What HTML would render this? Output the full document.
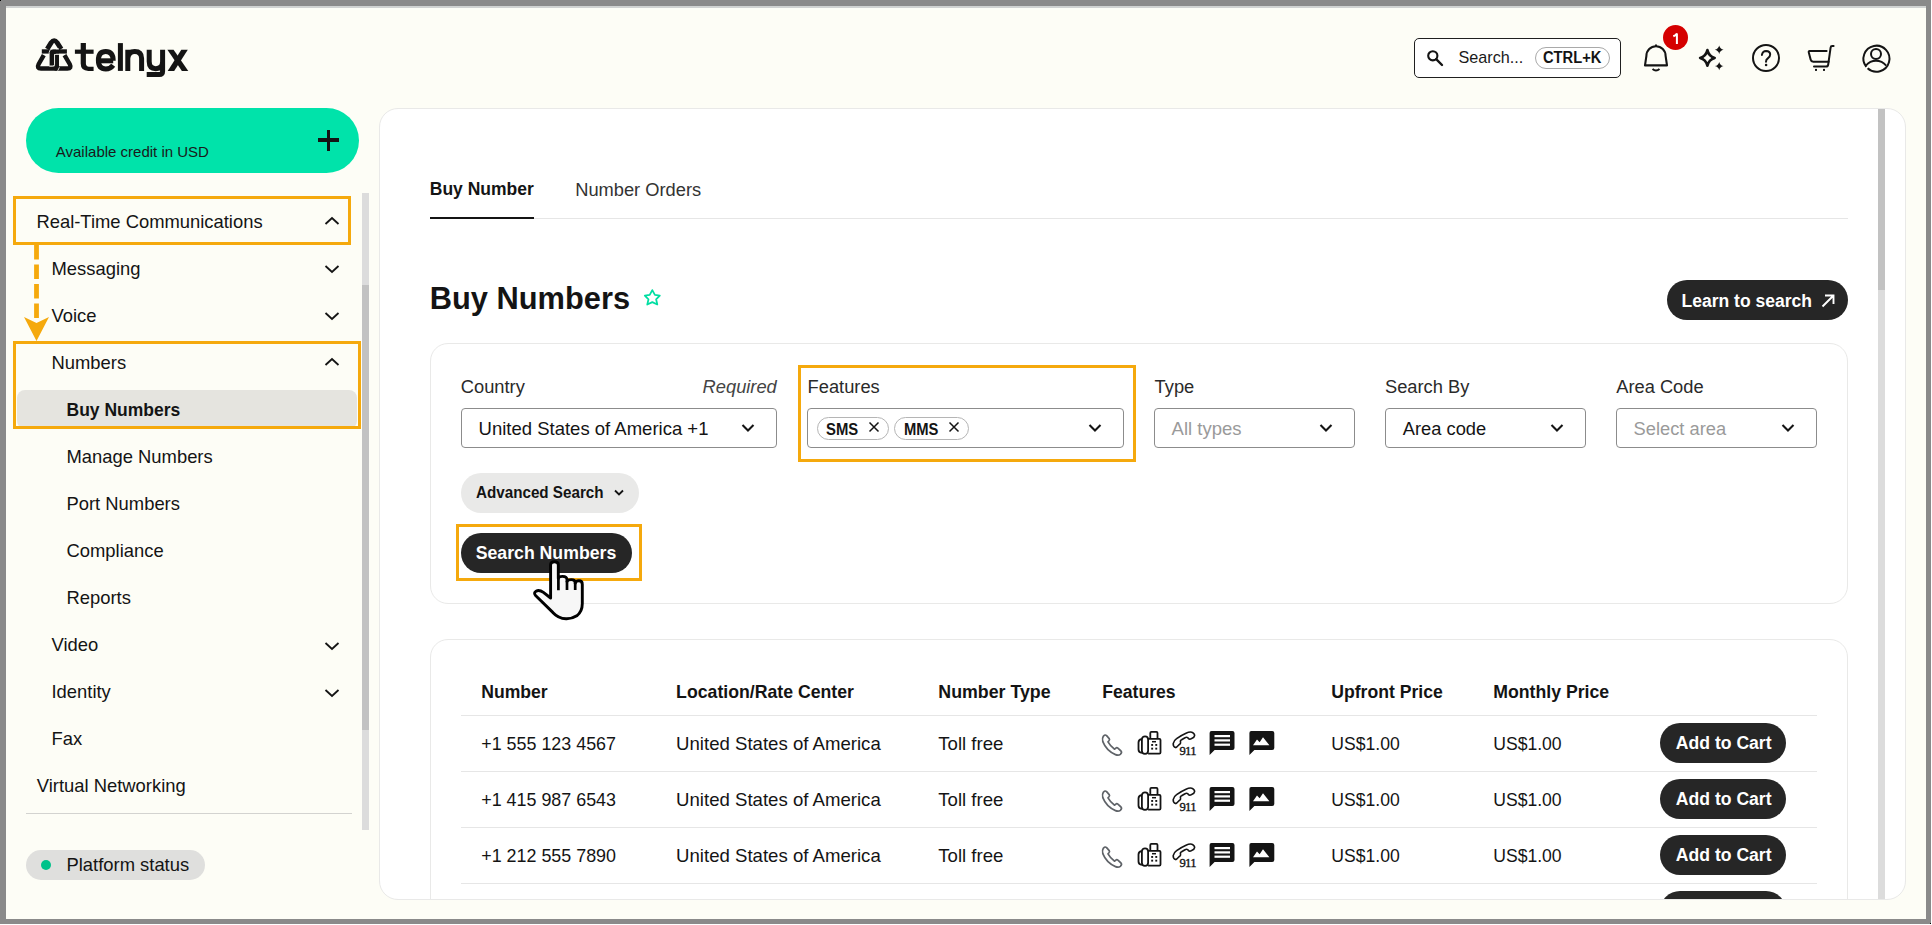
<!DOCTYPE html><html><head><meta charset="utf-8"><style>
html,body{margin:0;padding:0;}
body{width:1932px;height:925px;overflow:hidden;background:#ffffff;position:relative;font-family:"Liberation Sans",sans-serif;}
.a{position:absolute;box-sizing:border-box;}
.t{position:absolute;white-space:nowrap;line-height:1;}
svg{position:absolute;overflow:visible;}
</style></head><body>
<div class="a" style="left:0px;top:0px;width:1931px;height:924px;background:#8a8a8a;"></div>
<div class="a" style="left:6px;top:6px;width:1920px;height:913px;background:#fdfdf6;"></div>
<div class="a" style="left:6px;top:6px;width:1920px;height:2px;background:#d0d2d1;"></div>
<div class="a" style="left:0px;top:0px;width:1px;height:1px;background:#000;"></div>
<div class="a" style="left:1930px;top:923px;width:1px;height:1px;background:#000;"></div>
<svg style="left:0;top:0" width="200" height="90" viewBox="0 0 200 90">
<g fill="none" stroke="#141414" stroke-width="4.4" stroke-linejoin="round">
<path d="M47.2,49 L51.2,42.6 Q54.15,38.6 57.1,42.6 L61.2,49" stroke-width="4.9"/>
<path d="M43.8,55.1 L38.6,64.2 Q36.4,68.5 41,68.5 L67.4,68.5 Q72,68.5 69.8,64.2 L64.5,55.1" stroke-linejoin="miter"/>
</g>
<rect x="41.8" y="49.3" width="25.1" height="4.3" fill="#141414"/>
<path d="M49.6,65.7 L49.6,52.7 Q49.6,49.3 53,49.3 L56,49.3 L56,54 L54.2,54 L54.2,65.7 Z" fill="#141414"/>
<rect x="54.6" y="53.5" width="4.4" height="17.1" fill="#141414"/>
<g fill="none" stroke="#fdfdf6" stroke-width="0.85">
<path d="M49.15,53.8 L49.15,52.6 Q49.15,48.85 53,48.85 L59,48.85"/>
<path d="M59.4,54.45 L54.55,54.45 L54.55,64.4 Q54.55,66.2 52.4,66.2 L49.3,66.2"/>
<path d="M59.4,67.3 L57.7,70.9"/>
</g>
<g fill="#141414">
<rect x="74.9" y="49.6" width="18.7" height="4.2"/>
<path d="M80.7,43.1 L85.9,43.1 L85.9,63.6 Q85.9,66.7 89,66.7 L93.6,66.7 L93.6,70.9 L88.3,70.9 Q80.7,70.9 80.7,63.6 Z"/>
<rect x="117.9" y="43.1" width="5" height="27.8"/>
<polygon points="167.4,49.75 173.6,49.75 188.3,70.9 181.9,70.9"/>
<polygon points="181.3,49.75 187.8,49.75 174.2,70.9 167.7,70.9"/>
</g>
<g fill="none" stroke="#141414" stroke-width="5">
<path d="M98.3,60.8 L113.2,60.8"/>
<path d="M113.2,60.8 Q113.2,51.4 105.8,51.4 Q98.4,51.4 98.4,60.2 Q98.4,68.9 105.8,68.9 Q110.4,68.9 113.2,65.2"/>
<path d="M127.8,49.75 L127.8,70.9 M127.8,58.5 Q128.2,51.4 134.8,51.4 Q141.6,51.4 141.6,58.5 L141.6,70.9"/>
<path d="M149.2,49.75 L149.2,61.6 Q149.2,68.7 155.8,68.7 Q162.6,68.7 162.6,61.6 M162.6,49.75 L162.6,71.2 Q162.6,74.5 159.3,74.5 L146.7,74.5"/>
</g>
</svg>
<div class="a" style="left:1414px;top:38px;width:207px;height:40px;border:1.3px solid #1f1f1f;border-radius:5px;background:#ffffff;"></div>
<svg style="left:1426px;top:49px" width="18" height="18" viewBox="0 0 18 18">
<circle cx="6.8" cy="6.8" r="4.6" fill="none" stroke="#141414" stroke-width="2.1"/>
<path d="M10.2,10.2 L16,16" stroke="#141414" stroke-width="2.4" stroke-linecap="round"/></svg>
<div class="t" style="left:1458.5px;top:48.6px;font-size:16.2px;font-weight:400;color:#1a1a1a;">Search...</div>
<div class="a" style="left:1535px;top:47px;width:75px;height:22px;border:1px solid #a9a9a9;border-radius:11px;"></div>
<div class="t" style="left:1543.0px;top:49.4px;font-size:17.4px;font-weight:700;color:#141414;transform:scaleX(0.845);transform-origin:0 0;">CTRL+K</div>
<svg style="left:1640px;top:40px" width="32" height="36" viewBox="0 0 32 36">
<g fill="none" stroke="#141414" stroke-width="2">
<path d="M5,25.4 L6.4,15.8 A9.6,9.6 0 0 1 25.6,15.8 L27,25.4 Z" stroke-linejoin="round" stroke-width="2.1"/>
<path d="M16,4.5 L16,6.2"/>
<path d="M12.5,29 Q16,32 19.5,29"/>
</g></svg>
<div class="a" style="left:1663.2px;top:25.2px;width:25.3px;height:25.3px;border-radius:50%;background:#d50000;"></div>
<svg style="left:1670px;top:30px" width="12" height="16" viewBox="0 0 12 16"><path d="M3.3,6.3 Q5.8,5.3 6.9,3.4 L6.9,14" fill="none" stroke="#ffffff" stroke-width="2" stroke-linejoin="bevel"/></svg>
<svg style="left:1694px;top:44px" width="34" height="30" viewBox="0 0 34 30">
<path d="M13.4,6.1 Q14.9,12.4 20.7,13.9 Q14.9,15.4 13.4,21.7 Q11.9,15.4 6.1,13.9 Q11.9,12.4 13.4,6.1 Z" fill="none" stroke="#141414" stroke-width="2.6" stroke-linejoin="round"/>
<path d="M25.2,1.5 Q26,5 29.6,5.7 Q26,6.4 25.2,9.9 Q24.4,6.4 20.8,5.7 Q24.4,5 25.2,1.5 Z" fill="#141414"/>
<path d="M25.2,17.9 Q26,21.4 29.6,22.1 Q26,22.8 25.2,26.3 Q24.4,22.8 20.8,22.1 Q24.4,21.4 25.2,17.9 Z" fill="#141414"/>
</svg>
<svg style="left:1750px;top:42px" width="32" height="32" viewBox="0 0 32 32">
<circle cx="16" cy="16" r="13" fill="none" stroke="#141414" stroke-width="2"/>
<path d="M11.9,12.9 Q12.6,9 16.1,9 Q20.1,9.1 20.2,12.4 Q20.3,14.6 17.8,16.3 Q16,17.5 16,19.8" fill="none" stroke="#141414" stroke-width="2" stroke-linecap="round"/>
<circle cx="16.1" cy="23" r="1.3" fill="#141414"/>
</svg>
<svg style="left:1800px;top:40px" width="40" height="34" viewBox="0 0 40 34">
<g fill="none" stroke="#141414" stroke-width="2" stroke-linecap="round" stroke-linejoin="round">
<path d="M33.6,6 L32.2,6 Q30.8,6 30.6,7.6 L28.2,24.6 Q27.9,26.6 26,26.6 L14,26.6"/>
<path d="M26.6,11.1 L9.6,11.1 Q8.4,11.1 8.8,12.5 L10.7,19.8 Q11.2,21.7 13.2,21.7 L28.6,21.7"/>
</g>
<rect x="15" y="28.9" width="2" height="2" fill="#141414"/><rect x="23" y="28.9" width="2" height="2" fill="#141414"/>
</svg>
<svg style="left:1860px;top:42px" width="32" height="32" viewBox="0 0 32 32">
<g fill="none" stroke="#141414" stroke-width="2">
<path d="M6.3,24.8 A13,13 0 1 1 7.6,26.2"/>
<circle cx="16" cy="12" r="5"/>
<path d="M5.8,23.6 Q10,18.8 16,18.8 Q22,18.8 26.2,23.6"/>
</g></svg>
<div class="a" style="left:26px;top:108px;width:333px;height:65px;border-radius:33px;background:#00e3aa;"></div>
<div class="t" style="left:55.8px;top:144.0px;font-size:15px;font-weight:400;color:#1a1a1a;">Available credit in USD</div>
<div class="a" style="left:318px;top:138.4px;width:21px;height:3.1999999999999886px;background:#141414;"></div>
<div class="a" style="left:326.9px;top:130px;width:3.2000000000000455px;height:20.5px;background:#141414;"></div>
<div class="a" style="left:362px;top:193px;width:7px;height:637px;background:#dcdcdc;"></div>
<div class="a" style="left:362px;top:285px;width:7px;height:445px;background:#c2c2c2;"></div>
<div class="a" style="left:17px;top:390px;width:340px;height:39px;border-radius:8px;background:#e5e4df;"></div>
<div class="t" style="left:36.4px;top:212.8px;font-size:18.4px;font-weight:400;color:#141414;">Real-Time Communications</div>
<svg style="left:324px;top:214.4px" width="16" height="12" viewBox="0 0 16 12"><path d="M1.5,10 L8,4 L14.5,10" fill="none" stroke="#141414" stroke-width="1.8"/></svg>
<div class="t" style="left:51.5px;top:259.8px;font-size:18.4px;font-weight:400;color:#141414;">Messaging</div>
<svg style="left:324px;top:263.4px" width="16" height="12" viewBox="0 0 16 12"><path d="M1.5,3 L8,9 L14.5,3" fill="none" stroke="#141414" stroke-width="1.8"/></svg>
<div class="t" style="left:51.5px;top:306.8px;font-size:18.4px;font-weight:400;color:#141414;">Voice</div>
<svg style="left:324px;top:310.4px" width="16" height="12" viewBox="0 0 16 12"><path d="M1.5,3 L8,9 L14.5,3" fill="none" stroke="#141414" stroke-width="1.8"/></svg>
<div class="t" style="left:51.5px;top:353.8px;font-size:18.4px;font-weight:400;color:#141414;">Numbers</div>
<svg style="left:324px;top:355.4px" width="16" height="12" viewBox="0 0 16 12"><path d="M1.5,10 L8,4 L14.5,10" fill="none" stroke="#141414" stroke-width="1.8"/></svg>
<div class="t" style="left:66.5px;top:401.6px;font-size:17.5px;font-weight:700;color:#141414;">Buy Numbers</div>
<div class="t" style="left:66.5px;top:447.8px;font-size:18.4px;font-weight:400;color:#141414;">Manage Numbers</div>
<div class="t" style="left:66.5px;top:495.0px;font-size:18.4px;font-weight:400;color:#141414;">Port Numbers</div>
<div class="t" style="left:66.5px;top:542.0px;font-size:18.4px;font-weight:400;color:#141414;">Compliance</div>
<div class="t" style="left:66.5px;top:589.0px;font-size:18.4px;font-weight:400;color:#141414;">Reports</div>
<div class="t" style="left:51.5px;top:636.0px;font-size:18.4px;font-weight:400;color:#141414;">Video</div>
<svg style="left:324px;top:639.6px" width="16" height="12" viewBox="0 0 16 12"><path d="M1.5,3 L8,9 L14.5,3" fill="none" stroke="#141414" stroke-width="1.8"/></svg>
<div class="t" style="left:51.5px;top:683.0px;font-size:18.4px;font-weight:400;color:#141414;">Identity</div>
<svg style="left:324px;top:686.6px" width="16" height="12" viewBox="0 0 16 12"><path d="M1.5,3 L8,9 L14.5,3" fill="none" stroke="#141414" stroke-width="1.8"/></svg>
<div class="t" style="left:51.5px;top:730.0px;font-size:18.4px;font-weight:400;color:#141414;">Fax</div>
<div class="t" style="left:36.8px;top:777.0px;font-size:18.4px;font-weight:400;color:#141414;">Virtual Networking</div>
<div class="a" style="left:13px;top:196px;width:338px;height:49px;border:3px solid #f5a90d;"></div>
<div class="a" style="left:13px;top:341px;width:348px;height:88px;border:3px solid #f5a90d;"></div>
<svg style="left:0;top:0" width="60" height="350" viewBox="0 0 60 350">
<path d="M36.5,245 L36.5,323" stroke="#f5a90d" stroke-width="4.8" stroke-dasharray="14.5,5"/>
<path d="M24,317 L36.5,323 L49,317 L36.5,341 Z" fill="#f5a90d"/>
</svg>
<div class="a" style="left:26px;top:813px;width:326px;height:1px;background:#d3d3d0;"></div>
<div class="a" style="left:26px;top:850px;width:179px;height:30px;border-radius:15px;background:#dfdfdd;"></div>
<div class="a" style="left:40.7px;top:860px;width:10.3px;height:10.3px;border-radius:50%;background:#00c28a;"></div>
<div class="t" style="left:66.5px;top:856.4px;font-size:18.4px;font-weight:400;color:#141414;">Platform status</div>
<div class="a" style="left:379px;top:108px;width:1527px;height:792px;border:1px solid #e9e9e8;border-radius:19px;background:#ffffff;overflow:hidden;">
<div class="a" style="left:-380px;top:-109px;width:1932px;height:925px;">
<div class="t" style="left:429.8px;top:181.2px;font-size:17.5px;font-weight:700;color:#141414;">Buy Number</div>
<div class="t" style="left:575.2px;top:180.5px;font-size:18.3px;font-weight:400;color:#333333;">Number Orders</div>
<div class="a" style="left:534px;top:218px;width:1314px;height:1px;background:#e6e6e6;"></div>
<div class="a" style="left:430px;top:217px;width:104px;height:2px;background:#141414;"></div>
<div class="t" style="left:429.8px;top:283.9px;font-size:30.8px;font-weight:700;color:#141414;">Buy Numbers</div>
<svg style="left:640px;top:286px" width="24" height="24" viewBox="0 0 24 24">
<path d="M12.3,4.1 L14.9,8.9 L19.8,9.6 L16.1,13.3 L17.3,18.5 L12.3,16.1 L7.3,18.5 L8.5,13.3 L4.8,9.6 L9.7,8.9 Z" fill="none" stroke="#00dea2" stroke-width="1.75" stroke-linejoin="round"/></svg>
<div class="a" style="left:1667px;top:280px;width:181px;height:40px;border-radius:20px;background:#262626;"></div>
<div class="t" style="left:1681.6px;top:292.8px;font-size:17.5px;font-weight:700;color:#ffffff;">Learn to search</div>
<svg style="left:1819px;top:292px" width="18" height="18" viewBox="0 0 18 18"><path d="M3.5,14.5 L14.5,3.5 M6,3.5 L14.5,3.5 L14.5,12" fill="none" stroke="#ffffff" stroke-width="1.9"/></svg>
<div class="a" style="left:430px;top:343px;width:1418px;height:261px;border:1px solid #e9e9e8;border-radius:18px;"></div>
<div class="t" style="left:460.8px;top:378.1px;font-size:18.3px;font-weight:400;color:#2a2a2a;">Country</div>
<div class="t" style="left:702.6px;top:378.1px;font-size:18.3px;font-weight:400;color:#444444;font-style:italic;">Required</div>
<div class="t" style="left:807.6px;top:378.1px;font-size:18.3px;font-weight:400;color:#2a2a2a;">Features</div>
<div class="t" style="left:1154.6px;top:378.1px;font-size:18.3px;font-weight:400;color:#2a2a2a;">Type</div>
<div class="t" style="left:1385.0px;top:378.1px;font-size:18.3px;font-weight:400;color:#2a2a2a;">Search By</div>
<div class="t" style="left:1616.2px;top:378.1px;font-size:18.3px;font-weight:400;color:#2a2a2a;">Area Code</div>
<div class="a" style="left:461px;top:408px;width:316px;height:40px;border:1px solid #8c8c8c;border-radius:4px;background:#fff;"></div>
<svg style="left:740px;top:420px" width="16" height="16" viewBox="0 0 16 16"><path d="M2.5,5 L8,10.5 L13.5,5" fill="none" stroke="#141414" stroke-width="2.1"/></svg>
<div class="a" style="left:807px;top:408px;width:317px;height:40px;border:1px solid #8c8c8c;border-radius:4px;background:#fff;"></div>
<svg style="left:1087px;top:420px" width="16" height="16" viewBox="0 0 16 16"><path d="M2.5,5 L8,10.5 L13.5,5" fill="none" stroke="#141414" stroke-width="2.1"/></svg>
<div class="a" style="left:1154px;top:408px;width:201px;height:40px;border:1px solid #8c8c8c;border-radius:4px;background:#fff;"></div>
<svg style="left:1318px;top:420px" width="16" height="16" viewBox="0 0 16 16"><path d="M2.5,5 L8,10.5 L13.5,5" fill="none" stroke="#141414" stroke-width="2.1"/></svg>
<div class="a" style="left:1385px;top:408px;width:201px;height:40px;border:1px solid #8c8c8c;border-radius:4px;background:#fff;"></div>
<svg style="left:1549px;top:420px" width="16" height="16" viewBox="0 0 16 16"><path d="M2.5,5 L8,10.5 L13.5,5" fill="none" stroke="#141414" stroke-width="2.1"/></svg>
<div class="a" style="left:1616px;top:408px;width:201px;height:40px;border:1px solid #8c8c8c;border-radius:4px;background:#fff;"></div>
<svg style="left:1780px;top:420px" width="16" height="16" viewBox="0 0 16 16"><path d="M2.5,5 L8,10.5 L13.5,5" fill="none" stroke="#141414" stroke-width="2.1"/></svg>
<div class="t" style="left:478.6px;top:419.7px;font-size:18.5px;font-weight:400;color:#141414;">United States of America +1</div>
<div class="t" style="left:1171.6px;top:419.7px;font-size:18.5px;font-weight:400;color:#9a9a9a;">All types</div>
<div class="t" style="left:1402.8px;top:419.9px;font-size:18.3px;font-weight:400;color:#141414;">Area code</div>
<div class="t" style="left:1633.6px;top:419.9px;font-size:18.3px;font-weight:400;color:#9a9a9a;">Select area</div>
<div class="a" style="left:817px;top:417px;width:72px;height:23px;border:1px solid #b5b5b5;border-radius:12px;background:#fff;"></div>
<div class="t" style="left:826.0px;top:422.0px;font-size:16.6px;font-weight:700;color:#141414;transform:scaleX(0.895);transform-origin:0 0;">SMS</div>
<svg style="left:868px;top:421px" width="12" height="12" viewBox="0 0 12 12"><path d="M1.5,1.5 L10.5,10.5 M10.5,1.5 L1.5,10.5" stroke="#141414" stroke-width="1.5"/></svg>
<div class="a" style="left:894px;top:417px;width:75px;height:23px;border:1px solid #b5b5b5;border-radius:12px;background:#fff;"></div>
<div class="t" style="left:903.6px;top:422.0px;font-size:16.6px;font-weight:700;color:#141414;transform:scaleX(0.89);transform-origin:0 0;">MMS</div>
<svg style="left:948px;top:421px" width="12" height="12" viewBox="0 0 12 12"><path d="M1.5,1.5 L10.5,10.5 M10.5,1.5 L1.5,10.5" stroke="#141414" stroke-width="1.5"/></svg>
<div class="a" style="left:798px;top:365px;width:338px;height:97px;border:3px solid #f5a90d;"></div>
<div class="a" style="left:461px;top:473px;width:178px;height:40px;border-radius:20px;background:#e9e9e8;"></div>
<div class="t" style="left:476.0px;top:484.7px;font-size:16px;font-weight:700;color:#141414;transform:scaleX(0.95);transform-origin:0 0;">Advanced Search</div>
<svg style="left:612px;top:487px" width="14" height="12" viewBox="0 0 14 12"><path d="M3,3.5 L7,7.5 L11,3.5" fill="none" stroke="#141414" stroke-width="1.8"/></svg>
<div class="a" style="left:461px;top:533px;width:171px;height:40px;border-radius:20px;background:#262626;"></div>
<div class="t" style="left:475.7px;top:544.8px;font-size:17.7px;font-weight:700;color:#ffffff;">Search Numbers</div>
<div class="a" style="left:456px;top:524px;width:186px;height:57px;border:3px solid #f5a90d;"></div>
<div class="a" style="left:430px;top:639px;width:1418px;height:400px;border:1px solid #e9e9e8;border-radius:18px;"></div>
<div class="t" style="left:481.2px;top:683.9px;font-size:17.6px;font-weight:700;color:#141414;">Number</div>
<div class="t" style="left:676.1px;top:683.8px;font-size:17.7px;font-weight:700;color:#141414;">Location/Rate Center</div>
<div class="t" style="left:938.3px;top:683.7px;font-size:17.8px;font-weight:700;color:#141414;">Number Type</div>
<div class="t" style="left:1102.3px;top:683.9px;font-size:17.6px;font-weight:700;color:#141414;">Features</div>
<div class="t" style="left:1331.3px;top:683.9px;font-size:17.6px;font-weight:700;color:#141414;">Upfront Price</div>
<div class="t" style="left:1493.2px;top:683.8px;font-size:17.7px;font-weight:700;color:#141414;">Monthly Price</div>
<div class="a" style="left:461px;top:715px;width:1356px;height:1px;background:#e6e6e6;"></div>
<div class="t" style="left:481.2px;top:735.7px;font-size:17.9px;font-weight:400;color:#141414;">+1 555 123 4567</div>
<div class="t" style="left:676.1px;top:735.2px;font-size:18.6px;font-weight:400;color:#141414;">United States of America</div>
<div class="t" style="left:938.3px;top:735.2px;font-size:18.6px;font-weight:400;color:#141414;">Toll free</div>
<div class="t" style="left:1331.3px;top:736.0px;font-size:17.6px;font-weight:400;color:#141414;">US$1.00</div>
<div class="t" style="left:1493.2px;top:736.0px;font-size:17.6px;font-weight:400;color:#141414;">US$1.00</div>
<svg style="left:1100px;top:730px" width="180" height="28" viewBox="0 0 180 28">
<path d="M3.3,6.2 Q5,4.2 6.6,5.6 L9.2,8.6 Q10.1,9.8 8.8,11 L8,11.9 Q10.4,16.3 14.6,19.2 L15.6,18.3 Q16.8,17.2 17.9,18.2 L21,21 Q22.3,22.4 20.3,24.3 Q18.5,25.8 15.5,24.6 Q6.5,20.8 2.8,11.6 Q1.9,8.3 3.3,6.2 Z" fill="none" stroke="#5f6368" stroke-width="1.7" stroke-linejoin="round"/>
<g fill="none" stroke="#141414" stroke-width="1.8">
<rect x="41.9" y="6.3" width="6.2" height="17.6" rx="3.1"/>
<path d="M41.9,9.2 Q38.5,9.4 38.5,12.4 L38.5,19.6 Q38.5,22.6 41.9,22.8"/>
<path d="M48.1,8.9 L59.4,8.9 Q60.5,8.9 60.5,10 L60.5,22.5 Q60.5,23.6 59.4,23.6 L48.1,23.6"/>
<path d="M50.3,8.9 L50.3,3 Q50.3,1.9 51.4,1.9 L56.4,1.9 Q57.5,1.9 57.5,3 L57.5,8.9"/>
<path d="M52,11.7 L56,11.7" stroke-width="1.5"/>
</g>
<g fill="#141414"><rect x="51.2" y="14" width="1.9" height="1.9"/><rect x="55.3" y="14" width="1.9" height="1.9"/><rect x="51.2" y="17.7" width="1.9" height="1.9"/><rect x="55.3" y="17.7" width="1.9" height="1.9"/></g>
<path d="M75.7,17.6 Q73,16.8 73.2,13.6 Q73.6,10.6 76.6,8.6 Q81,5.4 86,3.2 Q89.5,1.6 91.8,2.2 Q94.6,3.2 94.6,5.6 Q94.4,7.4 91.6,8.6 Q89.6,9.6 88.4,8.6 L87.6,7.6 Q86.6,6.9 84.6,8 L81.6,9.8 Q79.8,10.8 80.6,12 Q81,13.6 79,14.8 L77,16.8 Q76.4,17.6 75.7,17.6 Z" fill="none" stroke="#141414" stroke-width="1.6" stroke-linejoin="round"/>
<text x="79.4" y="24.8" font-family="Liberation Serif" font-weight="400" font-size="12.6" fill="#141414" stroke="#141414" stroke-width="0.35" letter-spacing="-0.6">911</text>
<path d="M109.6,1 L132.4,1 Q134.5,1 134.5,3 L134.5,18 Q134.5,20 132.4,20 L114.6,20 L109.6,25 L109.6,3 Q109.6,1 111.5,1 Z" fill="#141414"/>
<rect x="114.5" y="5" width="15.5" height="2.2" fill="#fff"/><rect x="114.5" y="9.3" width="15.5" height="2.2" fill="#fff"/><rect x="114.5" y="13.6" width="15.5" height="2.2" fill="#fff"/>
<path d="M149.4,1 L172.2,1 Q174.3,1 174.3,3 L174.3,18 Q174.3,20 172.2,20 L154.4,20 L149.4,25 L149.4,3 Q149.4,1 151.3,1 Z" fill="#141414"/>
<path d="M153,15.3 L157,9.4 L159.6,12.2 L163,7.2 L169.4,15.3 Z" fill="#fff"/>
</svg>
<div class="a" style="left:1660px;top:723px;width:126px;height:40px;border-radius:20px;background:#262626;"></div>
<div class="t" style="left:1675.8px;top:734.7px;font-size:17.6px;font-weight:700;color:#ffffff;">Add to Cart</div>
<div class="a" style="left:461px;top:771.3px;width:1356px;height:1.0px;background:#e6e6e6;"></div>
<div class="t" style="left:481.2px;top:791.6px;font-size:17.9px;font-weight:400;color:#141414;">+1 415 987 6543</div>
<div class="t" style="left:676.1px;top:791.1px;font-size:18.6px;font-weight:400;color:#141414;">United States of America</div>
<div class="t" style="left:938.3px;top:791.1px;font-size:18.6px;font-weight:400;color:#141414;">Toll free</div>
<div class="t" style="left:1331.3px;top:791.9px;font-size:17.6px;font-weight:400;color:#141414;">US$1.00</div>
<div class="t" style="left:1493.2px;top:791.9px;font-size:17.6px;font-weight:400;color:#141414;">US$1.00</div>
<svg style="left:1100px;top:786px" width="180" height="28" viewBox="0 0 180 28">
<path d="M3.3,6.2 Q5,4.2 6.6,5.6 L9.2,8.6 Q10.1,9.8 8.8,11 L8,11.9 Q10.4,16.3 14.6,19.2 L15.6,18.3 Q16.8,17.2 17.9,18.2 L21,21 Q22.3,22.4 20.3,24.3 Q18.5,25.8 15.5,24.6 Q6.5,20.8 2.8,11.6 Q1.9,8.3 3.3,6.2 Z" fill="none" stroke="#5f6368" stroke-width="1.7" stroke-linejoin="round"/>
<g fill="none" stroke="#141414" stroke-width="1.8">
<rect x="41.9" y="6.3" width="6.2" height="17.6" rx="3.1"/>
<path d="M41.9,9.2 Q38.5,9.4 38.5,12.4 L38.5,19.6 Q38.5,22.6 41.9,22.8"/>
<path d="M48.1,8.9 L59.4,8.9 Q60.5,8.9 60.5,10 L60.5,22.5 Q60.5,23.6 59.4,23.6 L48.1,23.6"/>
<path d="M50.3,8.9 L50.3,3 Q50.3,1.9 51.4,1.9 L56.4,1.9 Q57.5,1.9 57.5,3 L57.5,8.9"/>
<path d="M52,11.7 L56,11.7" stroke-width="1.5"/>
</g>
<g fill="#141414"><rect x="51.2" y="14" width="1.9" height="1.9"/><rect x="55.3" y="14" width="1.9" height="1.9"/><rect x="51.2" y="17.7" width="1.9" height="1.9"/><rect x="55.3" y="17.7" width="1.9" height="1.9"/></g>
<path d="M75.7,17.6 Q73,16.8 73.2,13.6 Q73.6,10.6 76.6,8.6 Q81,5.4 86,3.2 Q89.5,1.6 91.8,2.2 Q94.6,3.2 94.6,5.6 Q94.4,7.4 91.6,8.6 Q89.6,9.6 88.4,8.6 L87.6,7.6 Q86.6,6.9 84.6,8 L81.6,9.8 Q79.8,10.8 80.6,12 Q81,13.6 79,14.8 L77,16.8 Q76.4,17.6 75.7,17.6 Z" fill="none" stroke="#141414" stroke-width="1.6" stroke-linejoin="round"/>
<text x="79.4" y="24.8" font-family="Liberation Serif" font-weight="400" font-size="12.6" fill="#141414" stroke="#141414" stroke-width="0.35" letter-spacing="-0.6">911</text>
<path d="M109.6,1 L132.4,1 Q134.5,1 134.5,3 L134.5,18 Q134.5,20 132.4,20 L114.6,20 L109.6,25 L109.6,3 Q109.6,1 111.5,1 Z" fill="#141414"/>
<rect x="114.5" y="5" width="15.5" height="2.2" fill="#fff"/><rect x="114.5" y="9.3" width="15.5" height="2.2" fill="#fff"/><rect x="114.5" y="13.6" width="15.5" height="2.2" fill="#fff"/>
<path d="M149.4,1 L172.2,1 Q174.3,1 174.3,3 L174.3,18 Q174.3,20 172.2,20 L154.4,20 L149.4,25 L149.4,3 Q149.4,1 151.3,1 Z" fill="#141414"/>
<path d="M153,15.3 L157,9.4 L159.6,12.2 L163,7.2 L169.4,15.3 Z" fill="#fff"/>
</svg>
<div class="a" style="left:1660px;top:779px;width:126px;height:40px;border-radius:20px;background:#262626;"></div>
<div class="t" style="left:1675.8px;top:790.6px;font-size:17.6px;font-weight:700;color:#ffffff;">Add to Cart</div>
<div class="a" style="left:461px;top:827.1999999999999px;width:1356px;height:1.0px;background:#e6e6e6;"></div>
<div class="t" style="left:481.2px;top:847.8px;font-size:17.9px;font-weight:400;color:#141414;">+1 212 555 7890</div>
<div class="t" style="left:676.1px;top:847.3px;font-size:18.6px;font-weight:400;color:#141414;">United States of America</div>
<div class="t" style="left:938.3px;top:847.3px;font-size:18.6px;font-weight:400;color:#141414;">Toll free</div>
<div class="t" style="left:1331.3px;top:848.1px;font-size:17.6px;font-weight:400;color:#141414;">US$1.00</div>
<div class="t" style="left:1493.2px;top:848.1px;font-size:17.6px;font-weight:400;color:#141414;">US$1.00</div>
<svg style="left:1100px;top:842px" width="180" height="28" viewBox="0 0 180 28">
<path d="M3.3,6.2 Q5,4.2 6.6,5.6 L9.2,8.6 Q10.1,9.8 8.8,11 L8,11.9 Q10.4,16.3 14.6,19.2 L15.6,18.3 Q16.8,17.2 17.9,18.2 L21,21 Q22.3,22.4 20.3,24.3 Q18.5,25.8 15.5,24.6 Q6.5,20.8 2.8,11.6 Q1.9,8.3 3.3,6.2 Z" fill="none" stroke="#5f6368" stroke-width="1.7" stroke-linejoin="round"/>
<g fill="none" stroke="#141414" stroke-width="1.8">
<rect x="41.9" y="6.3" width="6.2" height="17.6" rx="3.1"/>
<path d="M41.9,9.2 Q38.5,9.4 38.5,12.4 L38.5,19.6 Q38.5,22.6 41.9,22.8"/>
<path d="M48.1,8.9 L59.4,8.9 Q60.5,8.9 60.5,10 L60.5,22.5 Q60.5,23.6 59.4,23.6 L48.1,23.6"/>
<path d="M50.3,8.9 L50.3,3 Q50.3,1.9 51.4,1.9 L56.4,1.9 Q57.5,1.9 57.5,3 L57.5,8.9"/>
<path d="M52,11.7 L56,11.7" stroke-width="1.5"/>
</g>
<g fill="#141414"><rect x="51.2" y="14" width="1.9" height="1.9"/><rect x="55.3" y="14" width="1.9" height="1.9"/><rect x="51.2" y="17.7" width="1.9" height="1.9"/><rect x="55.3" y="17.7" width="1.9" height="1.9"/></g>
<path d="M75.7,17.6 Q73,16.8 73.2,13.6 Q73.6,10.6 76.6,8.6 Q81,5.4 86,3.2 Q89.5,1.6 91.8,2.2 Q94.6,3.2 94.6,5.6 Q94.4,7.4 91.6,8.6 Q89.6,9.6 88.4,8.6 L87.6,7.6 Q86.6,6.9 84.6,8 L81.6,9.8 Q79.8,10.8 80.6,12 Q81,13.6 79,14.8 L77,16.8 Q76.4,17.6 75.7,17.6 Z" fill="none" stroke="#141414" stroke-width="1.6" stroke-linejoin="round"/>
<text x="79.4" y="24.8" font-family="Liberation Serif" font-weight="400" font-size="12.6" fill="#141414" stroke="#141414" stroke-width="0.35" letter-spacing="-0.6">911</text>
<path d="M109.6,1 L132.4,1 Q134.5,1 134.5,3 L134.5,18 Q134.5,20 132.4,20 L114.6,20 L109.6,25 L109.6,3 Q109.6,1 111.5,1 Z" fill="#141414"/>
<rect x="114.5" y="5" width="15.5" height="2.2" fill="#fff"/><rect x="114.5" y="9.3" width="15.5" height="2.2" fill="#fff"/><rect x="114.5" y="13.6" width="15.5" height="2.2" fill="#fff"/>
<path d="M149.4,1 L172.2,1 Q174.3,1 174.3,3 L174.3,18 Q174.3,20 172.2,20 L154.4,20 L149.4,25 L149.4,3 Q149.4,1 151.3,1 Z" fill="#141414"/>
<path d="M153,15.3 L157,9.4 L159.6,12.2 L163,7.2 L169.4,15.3 Z" fill="#fff"/>
</svg>
<div class="a" style="left:1660px;top:835px;width:126px;height:40px;border-radius:20px;background:#262626;"></div>
<div class="t" style="left:1675.8px;top:846.8px;font-size:17.6px;font-weight:700;color:#ffffff;">Add to Cart</div>
<div class="a" style="left:461px;top:883.4px;width:1356px;height:1.0px;background:#e6e6e6;"></div>
<svg style="left:1100px;top:898px" width="180" height="28" viewBox="0 0 180 28">
<path d="M3.3,6.2 Q5,4.2 6.6,5.6 L9.2,8.6 Q10.1,9.8 8.8,11 L8,11.9 Q10.4,16.3 14.6,19.2 L15.6,18.3 Q16.8,17.2 17.9,18.2 L21,21 Q22.3,22.4 20.3,24.3 Q18.5,25.8 15.5,24.6 Q6.5,20.8 2.8,11.6 Q1.9,8.3 3.3,6.2 Z" fill="none" stroke="#5f6368" stroke-width="1.7" stroke-linejoin="round"/>
<g fill="none" stroke="#141414" stroke-width="1.8">
<rect x="41.9" y="6.3" width="6.2" height="17.6" rx="3.1"/>
<path d="M41.9,9.2 Q38.5,9.4 38.5,12.4 L38.5,19.6 Q38.5,22.6 41.9,22.8"/>
<path d="M48.1,8.9 L59.4,8.9 Q60.5,8.9 60.5,10 L60.5,22.5 Q60.5,23.6 59.4,23.6 L48.1,23.6"/>
<path d="M50.3,8.9 L50.3,3 Q50.3,1.9 51.4,1.9 L56.4,1.9 Q57.5,1.9 57.5,3 L57.5,8.9"/>
<path d="M52,11.7 L56,11.7" stroke-width="1.5"/>
</g>
<g fill="#141414"><rect x="51.2" y="14" width="1.9" height="1.9"/><rect x="55.3" y="14" width="1.9" height="1.9"/><rect x="51.2" y="17.7" width="1.9" height="1.9"/><rect x="55.3" y="17.7" width="1.9" height="1.9"/></g>
<path d="M75.7,17.6 Q73,16.8 73.2,13.6 Q73.6,10.6 76.6,8.6 Q81,5.4 86,3.2 Q89.5,1.6 91.8,2.2 Q94.6,3.2 94.6,5.6 Q94.4,7.4 91.6,8.6 Q89.6,9.6 88.4,8.6 L87.6,7.6 Q86.6,6.9 84.6,8 L81.6,9.8 Q79.8,10.8 80.6,12 Q81,13.6 79,14.8 L77,16.8 Q76.4,17.6 75.7,17.6 Z" fill="none" stroke="#141414" stroke-width="1.6" stroke-linejoin="round"/>
<text x="79.4" y="24.8" font-family="Liberation Serif" font-weight="400" font-size="12.6" fill="#141414" stroke="#141414" stroke-width="0.35" letter-spacing="-0.6">911</text>
<path d="M109.6,1 L132.4,1 Q134.5,1 134.5,3 L134.5,18 Q134.5,20 132.4,20 L114.6,20 L109.6,25 L109.6,3 Q109.6,1 111.5,1 Z" fill="#141414"/>
<rect x="114.5" y="5" width="15.5" height="2.2" fill="#fff"/><rect x="114.5" y="9.3" width="15.5" height="2.2" fill="#fff"/><rect x="114.5" y="13.6" width="15.5" height="2.2" fill="#fff"/>
<path d="M149.4,1 L172.2,1 Q174.3,1 174.3,3 L174.3,18 Q174.3,20 172.2,20 L154.4,20 L149.4,25 L149.4,3 Q149.4,1 151.3,1 Z" fill="#141414"/>
<path d="M153,15.3 L157,9.4 L159.6,12.2 L163,7.2 L169.4,15.3 Z" fill="#fff"/>
</svg>
<div class="a" style="left:1660px;top:891px;width:126px;height:40px;border-radius:20px;background:#262626;"></div>
<div class="t" style="left:1675.8px;top:902.8px;font-size:17.6px;font-weight:700;color:#ffffff;">Add to Cart</div>
<div class="a" style="left:461px;top:939.4px;width:1356px;height:1.0px;background:#e6e6e6;"></div>
</div>
<div class="a" style="left:1498px;top:0px;width:7px;height:792px;background:#dcdcdc;"></div>
<div class="a" style="left:1498px;top:0px;width:7px;height:181px;background:#c2c2c2;"></div>
</div>
<svg style="left:520px;top:555px" width="80" height="70" viewBox="0 0 80 70">
<path d="M30.6,43 L30.6,9.8 Q30.6,6.7 34.45,6.7 Q38.3,6.7 38.3,9.8 L38.3,23.6 Q38.6,21.4 42.6,21.4 Q46.9,21.4 47,24.8 L47,26.6 Q47.6,24.6 51.3,24.6 Q55.1,24.6 55.2,27.6 L55.2,28.4 Q55.8,25.8 58.9,25.8 Q62.3,25.8 62.3,29.4 L62.3,48.5 Q62.3,56.6 56.8,60.8 Q51.8,64 46,63.8 Q38.4,63.5 32.8,57.4 L15.8,40.8 Q13.2,37.8 16,36.2 Q19.2,34.4 23.4,37.4 Z" fill="#f7f7f7" stroke="#000" stroke-width="2.9" stroke-linejoin="round"/>
<path d="M38.4,23 L38.4,35.2 M47,26 L47,35 M55.2,28 L55.2,35" stroke="#000" stroke-width="2.7"/>
</svg>
</body></html>
